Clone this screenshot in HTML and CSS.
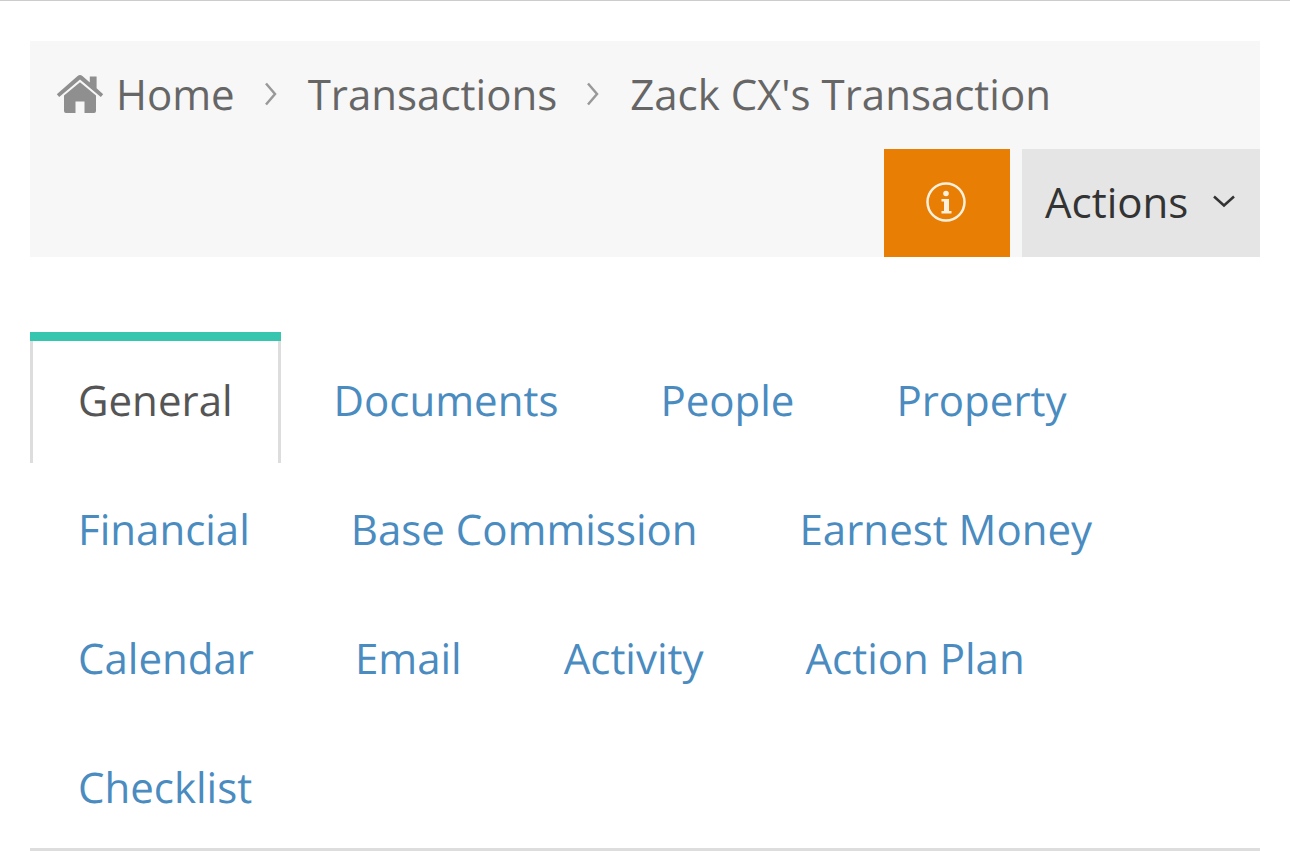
FILE: index.html
```html
<!DOCTYPE html>
<html lang="en">
<head>
    <meta charset="UTF-8">
    <meta name="viewport" content="width=device-width, initial-scale=1.0">
    <title>Zack CX's Transaction</title>
    <link rel="stylesheet" href="styles.css">
</head>
<body>

    <div class="page-bar">
        <ul class="breadcrumb">
            <li class="crumb-home">
                <svg class="home-icon" viewBox="0 0 48 40" aria-hidden="true">
                    <path d="M24 8.200 8 21.400V37a2 2 0 0 0 2 2H19.500V27.500h9V39H38a2 2 0 0 0 2-2V21.400z"/>
                    <path d="M.8 20.200 21.600 2a3.800 3.800 0 0 1 4.800 0L33.800 8.400V2.500H40.600V14.300L47.200 20.200 44.800 23 24 5.500 3.200 23z"/>
                </svg>
                <a href="#">Home</a>
            </li>
            <li class="sep"><svg class="chev-right" viewBox="0 0 12 24" aria-hidden="true"><path d="M1.500 1.500 10.500 12 1.500 22.500"/></svg></li>
            <li><a href="#">Transactions</a></li>
            <li class="sep"><svg class="chev-right" viewBox="0 0 12 24" aria-hidden="true"><path d="M1.500 1.500 10.500 12 1.500 22.500"/></svg></li>
            <li><a href="#">Zack CX's Transaction</a></li>
        </ul>
        <div class="page-actions">
            <button class="btn-info" type="button" aria-label="Info">
                <svg class="info-icon" viewBox="0 0 40 40" aria-hidden="true">
                    <circle cx="20" cy="20" r="18.500"/>
                    <circle class="solid" cx="20" cy="11.500" r="2.800"/>
                    <path class="solid" d="M15.500 17h7.500v12h2.500v2.500h-10V29h2.500v-9.500h-2.500z"/>
                </svg>
            </button>
            <button class="btn-actions" type="button">
                <span class="btn-label">Actions</span>
                <svg class="chev-down" viewBox="0 0 24 14" aria-hidden="true"><path d="M2 2.500 12 11.500 22 2.500"/></svg>
            </button>
        </div>
    </div>

    <div class="tabs">
        <ul class="tab-row">
            <li class="tab active"><a href="#">General</a></li>
            <li class="tab"><a href="#">Documents</a></li>
            <li class="tab"><a href="#">People</a></li>
            <li class="tab"><a href="#">Property</a></li>
        </ul>
        <ul class="tab-row">
            <li class="tab"><a href="#">Financial</a></li>
            <li class="tab"><a href="#">Base Commission</a></li>
            <li class="tab"><a href="#">Earnest Money</a></li>
        </ul>
        <ul class="tab-row">
            <li class="tab"><a href="#">Calendar</a></li>
            <li class="tab"><a href="#">Email</a></li>
            <li class="tab"><a href="#">Activity</a></li>
            <li class="tab"><a href="#">Action Plan</a></li>
        </ul>
        <ul class="tab-row">
            <li class="tab"><a href="#">Checklist</a></li>
        </ul>
    </div>

</body>
</html>
```

FILE: styles.css
```css
html, body {
    height: 851px;
    overflow: hidden;
}
body {
    margin: 0;
    padding: 40px 30px 0;
    border-top: 1px solid #ccc;
    box-sizing: border-box;
    background-color: #fff;
    font-family: "Open Sans", sans-serif;
    font-size: 42px;
    color: #666;
    text-rendering: geometricPrecision;
}
a {
    color: inherit;
    text-decoration: none;
}
ul {
    list-style: none;
    margin: 0;
    padding: 0;
}

/* breadcrumb bar */
.page-bar {
    height: 216px;
    background-color: #f7f7f7;
}
.breadcrumb {
    display: flex;
    align-items: center;
    height: 108px;
    padding: 0 0 2px 26px;
    box-sizing: border-box;
}
.crumb-home {
    display: flex;
    align-items: center;
}
.home-icon {
    width: 48px;
    height: 40px;
    margin: 0 12px 0 0;
    fill: #8f8f8f;
}
.sep {
    display: flex;
    margin: 0 31px 0 29px;
}
.chev-right {
    width: 13px;
    height: 24px;
    fill: none;
    stroke: #999;
    stroke-width: 2.500;
}
.page-actions {
    display: flex;
    justify-content: flex-end;
    gap: 12px;
}
.page-actions button {
    height: 108px;
    border: none;
    font-family: inherit;
    font-size: 42px;
    cursor: pointer;
}
.btn-info {
    width: 126px;
    padding: 0 2px 2px 0;
    background-color: #e87e04;
}
.info-icon {
    display: block;
    width: 40px;
    height: 40px;
    margin: 0 auto;
    fill: none;
    stroke: #fdf0dc;
    stroke-width: 2.500;
}
.info-icon .solid {
    fill: #fdf0dc;
    stroke: none;
}
.btn-actions {
    display: flex;
    align-items: center;
    width: 238px;
    padding: 0 0 0 23px;
    background-color: #e5e5e5;
    color: #333;
}
.btn-label {
    margin-bottom: 4px;
}
.chev-down {
    width: 24px;
    height: 14px;
    margin: 0 0 4px 24px;
    fill: none;
    stroke: #333;
    stroke-width: 2.500;
}

/* tabs */
.tabs {
    margin-top: 75px;
    border-bottom: 3px solid #ddd;
}
.tab-row {
    display: flex;
    column-gap: 6px;
    height: 129px;
}
.tab {
    padding: 0 48px;
    line-height: 138px;
    color: #4a8bc0;
}
.tab:first-child {
    margin-right: -1px;
}
.tab.active {
    height: 131px;
    padding: 0 45px;
    border-left: 3px solid #ddd;
    border-right: 3px solid #ddd;
    line-height: 120px;
    color: #555;
}
.tab.active::before {
    content: "";
    display: block;
    height: 9px;
    margin: 0 -48px;
    background-color: #36c6b0;
}
```
